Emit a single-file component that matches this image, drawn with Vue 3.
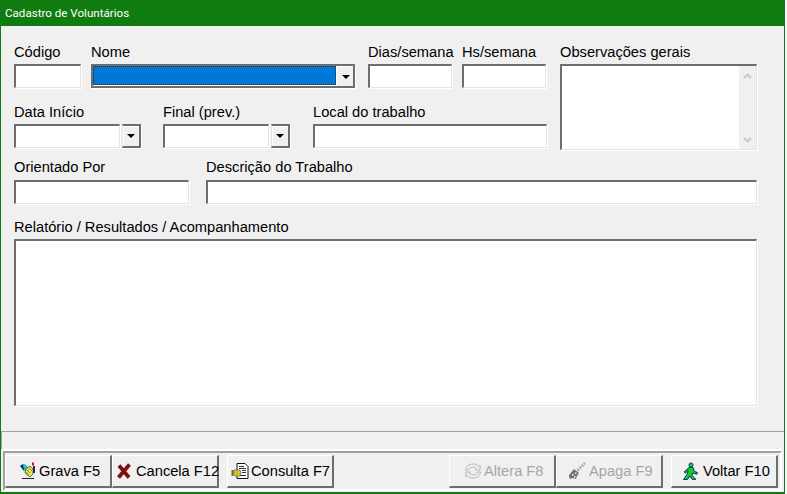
<template>
  <div class="win">
    <div class="title">Cadastro de Voluntários</div>
    <div class="body">
      <div class="form">
        <div class="left">
          <div class="row r1">
            <div class="field w67"><label>Código</label><div class="box"></div></div>
            <div class="field w264"><label>Nome</label>
              <div class="box combo">
                <div class="sel"></div>
                <div class="arrow"><i></i></div>
              </div>
            </div>
            <div class="field w84 ml3"><label>Dias/semana</label><div class="box"></div></div>
            <div class="field w84"><label>Hs/semana</label><div class="box"></div></div>
          </div>
          <div class="row r2">
            <div class="field w127"><label>Data Início</label>
              <div class="dcombo"><div class="box dinput"></div><div class="darrow"><i></i></div></div>
            </div>
            <div class="field w127 ml22"><label>Final (prev.)</label>
              <div class="dcombo"><div class="box dinput"></div><div class="darrow"><i></i></div></div>
            </div>
            <div class="field w234 ml23"><label>Local do trabalho</label><div class="box"></div></div>
          </div>
        </div>
        <div class="field obs"><label>Observações gerais</label>
          <div class="box tall">
            <div class="scroll">
              <svg width="9" height="6" viewBox="0 0 9 6"><path d="M1 5l3.500-3.500L8 5" fill="none" stroke="#c8c8c8" stroke-width="2"/></svg>
              <svg width="9" height="6" viewBox="0 0 9 6"><path d="M1 1l3.500 3.500L8 1" fill="none" stroke="#c8c8c8" stroke-width="2"/></svg>
            </div>
          </div>
        </div>
      </div>
      <div class="row r3">
        <div class="field w175"><label class="tall-label">Orientado Por</label><div class="box"></div></div>
        <div class="field grow"><label class="tall-label">Descrição do Trabalho</label><div class="box"></div></div>
      </div>
      <div class="field r4"><label>Relatório / Resultados / Acompanhamento</label><div class="box memo"></div></div>
    </div>
    <div class="status"></div>
    <div class="toolbar">
      <button class="btn p12">
        <svg width="18" height="18" viewBox="0 0 18 18"><path d="M4 16.500h12" stroke="#222"/><path d="M2 4l3-2 4 4-3 3z" fill="#06323e"/><path d="M5 3l2-1 4 4-4 3-1-1z" fill="#18c4c4"/><path d="M8 7l4-3 3 3v5l-3 3-5-4z" fill="#ecec4c" stroke="#333" stroke-width=".7"/><path d="M9 8l3 3M8 10l3 3M11 6l3 3" stroke="#665" stroke-width=".8"/><path d="M14 .5h2v3h-2z" fill="#d81010"/><path d="M15 4h2v7h-2z" fill="#1a2a70"/></svg>
        <span>Grava F5</span>
      </button>
      <button class="btn p3 g4">
        <svg width="16" height="18" viewBox="0 0 16 18"><path d="M3 3.500l10 12M13.500 2.500L2.500 15.500" fill="none" stroke="#7d1010" stroke-width="3.800"/></svg>
        <span>Cancela F12</span>
      </button>
      <button class="btn p3 ml8 g2">
        <svg width="18" height="18" viewBox="0 0 18 18"><path d="M6 1.500h8l3 3v12H6z" fill="#fff" stroke="#111"/><path d="M8 4.500h5M8 6.500h7M11 8.500h4M11 10.500h4M8 13.500h7" stroke="#234"/><path d="M0.500 8h2v6h-2z" fill="#7a6a20"/><path d="M3 8h6l1 3-1 3H4l-1-1z" fill="#ecdc40" stroke="#554" stroke-width=".7"/><path d="M4 10h5M4 12h5" stroke="#a89820" stroke-width=".8"/></svg>
        <span>Consulta F7</span>
      </button>
      <div class="spacer"></div>
      <button class="btn p14 off g2">
        <svg width="18" height="18" viewBox="0 0 18 18" fill="none" stroke="#b8b8b8"><path d="M1.500 8C2 4 5 2 9 2c2.500 0 4.500 1 5.500 2.500L16 3v5h-5l1.500-1.500C11.500 5.500 10 5 9 5 6.500 5 5 6 4.500 8z"/><path d="M16.500 10c-.5 4-3.500 6-7.500 6-2.500 0-4.500-1-5.500-2.500L2 15v-5h5l-1.500 1.500C6.500 12.500 8 13 9 13c2.500 0 4-1 4.500-3z"/></svg>
        <span>Altera F8</span>
      </button>
      <button class="btn p11 off">
        <svg width="18" height="18" viewBox="0 0 18 18"><path d="M9.500 8.500L17 1" stroke="#a8a8a8" stroke-width="2.500" stroke-dasharray="2 1"/><path d="M1 13l5-6 5 4-2 3-1 3-3-1-3 1-1-2z" fill="#747474"/><path d="M4 12h1.500v1.500H4zM7 10.500h1.500V12H7zM6 14h1.500v1.500H6z" fill="#efefef"/></svg>
        <span>Apaga F9</span>
      </button>
      <button class="btn p10 ml8">
        <svg width="18" height="18" viewBox="0 0 18 18"><circle cx="9" cy="3" r="2.100" fill="#10d020" stroke="#001a80" stroke-width=".8"/><path d="M7 5.500h4l1.500 4 3 1-.7 1.800-4-1.300-.8 2.200 3.500 3.800v.7h-3L7.800 14 5.500 17.500H1.500l3.500-5 1.200-4-2.700 2.500-1.500-1z" fill="#10d020" stroke="#001a80" stroke-width=".9"/></svg>
        <span>Voltar F10</span>
      </button>
    </div>
  </div>
</template>

<script setup>
</script>

<style>
html, body { margin: 0; background: #fff; }
</style>

<style scoped>
.win {
  width: 785px; height: 494px; box-sizing: border-box;
  background: #f0f0f0; display: flex; flex-direction: column;
  border: 1px solid #107c10; border-top: 0; border-bottom-width: 2px;
  font-family: "Liberation Sans", Arial, sans-serif; font-size: 14.67px; color: #000;
}
.title {
  height: 26px; margin: 0 -1px; background: #107c10; color: #fff;
  font-family: Roboto, "Liberation Sans", sans-serif;
  font-size: 11.6px; line-height: 27px; padding-left: 5px; flex: none;
}
.body { padding: 18px 0 0 13px; height: 380px; box-sizing: border-box; flex: none; }
.form { display: flex; }
.left { width: 546px; }
.row { display: flex; gap: 10px; }
.r1 { height: 60px; }
.r2 { gap: 0; }
.r3 { margin-top: 9px; width: 743px; gap: 17px; }
.r4 { margin-top: 15px; width: 743px; }
.field { display: flex; flex-direction: column; }
label { height: 20px; line-height: 16px; display: block; white-space: nowrap; }
.tall-label { height: 21px; }
.box {
  height: 24px; box-sizing: border-box; background: #fff;
  border-style: solid; border-width: 2px 1px 1px 2px;
  border-color: #6e6e6e #e4e4e4 #e4e4e4 #6e6e6e;
  box-shadow: 1px 1px 0 #fff;
}
.w67 { width: 67px; }
.w264 { width: 264px; }
.w84 { width: 84px; }
.w127 { width: 127px; }
.w234 { width: 234px; }
.w175 { width: 175px; }
.ml3 { margin-left: 3px; }
.ml22 { margin-left: 22px; }
.ml23 { margin-left: 23px; }
.ml8 { margin-left: 8px; }
.grow { flex: 1; }
.combo { display: flex; padding: 0; border-right-color: #6e6e6e; border-bottom-color: #6e6e6e; border-right-width: 2px; border-bottom-width: 2px; }
.sel { flex: 1; margin: 0 0 1px 0; background: #0078d7; outline: 1px dotted #3a2410; outline-offset: -1px; }
.arrow {
  width: 17px; flex: none; background: #f0f0f0; box-sizing: border-box;
  border-left: 1px solid #fff; border-top: 1px solid #fff;
  display: flex; align-items: center; justify-content: center; padding-left: 1px;
}
.dcombo { display: flex; height: 24px; }
.dinput { flex: 1; }
.darrow {
  width: 19px; margin-left: 2px; flex: none; height: 24px; box-sizing: border-box; background: #f0f0f0;
  border-style: solid; border-width: 2px 2px 2px 1px; border-color: #6e6e6e #6e6e6e #6e6e6e #e4e4e4;
  box-shadow: inset 1px 1px 0 #fff, 1px 1px 0 #fff;
  display: flex; align-items: center; justify-content: center;
}
.arrow i, .darrow i { width: 0; height: 0; border: 4px solid transparent; border-top-color: #000; border-bottom: 0; }
.obs { width: 197px; }
.tall { height: 86px; display: flex; justify-content: flex-end; }
.scroll {
  width: 17px; background: #f0f0f0; display: flex; flex-direction: column;
  justify-content: space-between; align-items: center; padding: 7px 0 6px; box-sizing: border-box;
}
.memo { height: 167px; }
.status { height: 18px; border-top: 1px solid #a0a0a0; border-left: 1px solid #a0a0a0; box-sizing: border-box; margin-top: 25px; flex: none; }
.toolbar {
  height: 40px; flex: none; display: flex; align-items: flex-start;
  margin: 2px 0 0 2px; width: 779px; padding: 2px 2px 0 0; box-sizing: border-box;
  border-style: solid; border-width: 2px; border-color: #a0a0a0 #fff #fff #a0a0a0;
  box-shadow: 0 -2px 0 #fff;
  background: #f0f0f0;
}
.btn {
  width: 107px; height: 33px; flex: none; box-sizing: border-box; padding: 0;
  background: #f0f0f0; font: inherit; color: #000;
  border-style: solid; border-width: 1px 2px 2px 1px; border-color: #fff #6e6e6e #6e6e6e #fff;
  display: flex; align-items: center; justify-content: flex-start; gap: 3px; white-space: nowrap; overflow: visible;
}
.btn svg, .btn span { flex: none; }
.btn span { line-height: 16px; }
.p12 { padding-left: 12px; }
.p3 { padding-left: 3px; }
.p14 { padding-left: 14px; }
.p11 { padding-left: 11px; }
.p10 { padding-left: 10px; }
.g2 { gap: 2px; }
.g4 { gap: 4px; }
.spacer { flex: 1; }
.off { color: #a6a6a6; }
</style>
